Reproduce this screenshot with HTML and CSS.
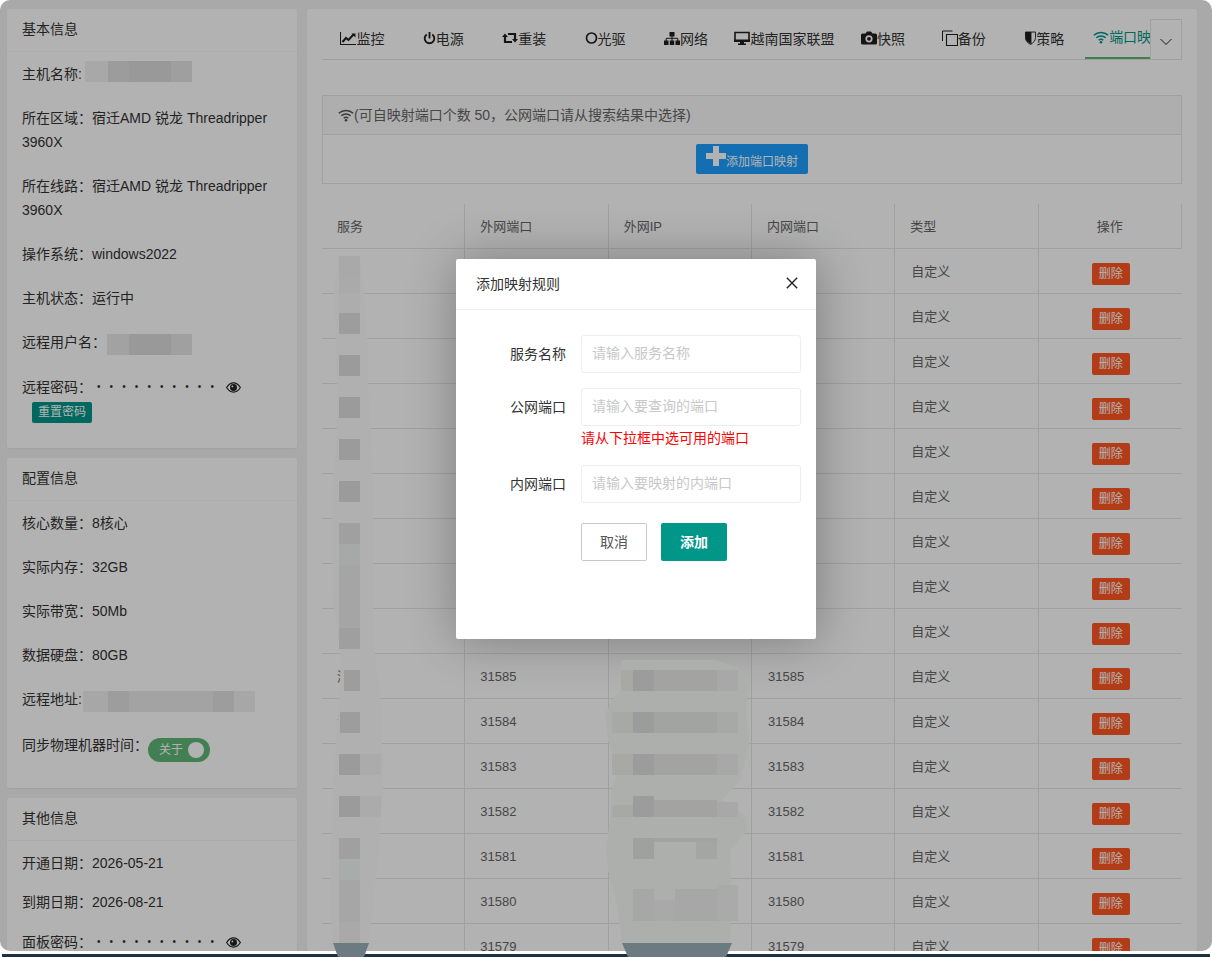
FILE: index.html
```html
<!DOCTYPE html>
<html lang="zh-CN">
<head>
<meta charset="utf-8">
<title>端口映射</title>
<link rel="stylesheet" href="styles.css">
</head>
<body>
<div class="shell">
  <div class="page">
    <aside class="side">
      <section class="card card-basic">
        <h3 class="card-head">基本信息</h3>
        <div class="card-body">
          <p class="row">主机名称:</p>
          <p class="row">所在区域：宿迁AMD 锐龙 Threadripper 3960X</p>
          <p class="row">所在线路：宿迁AMD 锐龙 Threadripper 3960X</p>
          <p class="row">操作系统：windows2022</p>
          <p class="row">主机状态：运行中</p>
          <p class="row">远程用户名：</p>
          <p class="row row-pass">远程密码：<span class="dots">••••••••••</span><svg class="eye" viewBox="0 0 16 12"><path d="M0.5 6C3 2 5.5 1 8 1s5 1 7.5 5C13 10 10.500 11 8 11S3 10 .5 6z" fill="none" stroke="currentColor" stroke-width="1.300"/><circle cx="8" cy="6" r="3.800" fill="currentColor"/><circle cx="6.800" cy="4.800" r="1" fill="#fff"/></svg><br><button class="btn-reset">重置密码</button></p>
        </div>
      </section>
      <section class="card card-config">
        <h3 class="card-head">配置信息</h3>
        <div class="card-body">
          <p class="row">核心数量：8核心</p>
          <p class="row">实际内存：32GB</p>
          <p class="row">实际带宽：50Mb</p>
          <p class="row">数据硬盘：80GB</p>
          <p class="row">远程地址:</p>
          <p class="row row-switch">同步物理机器时间：<span class="switch"><span>关于</span><i></i></span></p>
        </div>
      </section>
      <section class="card card-other">
        <h3 class="card-head">其他信息</h3>
        <div class="card-body">
          <p class="row">开通日期：2026-05-21</p>
          <p class="row">到期日期：2026-08-21</p>
          <p class="row row-pass">面板密码：<span class="dots">••••••••••</span><svg class="eye" viewBox="0 0 16 12"><path d="M0.5 6C3 2 5.5 1 8 1s5 1 7.5 5C13 10 10.500 11 8 11S3 10 .5 6z" fill="none" stroke="currentColor" stroke-width="1.300"/><circle cx="8" cy="6" r="3.800" fill="currentColor"/><circle cx="6.800" cy="4.800" r="1" fill="#fff"/></svg></p>
        </div>
      </section>
    </aside>

    <main class="panel">
      <div class="tabs">
        <ul class="tab-list">
          <li class="tab"><svg class="ico" viewBox="0 0 16 16"><path d="M.5 2v12.500H16" fill="none" stroke="currentColor" stroke-width="1.100"/><path d="M2.500 12l3.500-4 2.500 2 5-5.500" fill="none" stroke="currentColor" stroke-width="2"/><path d="M11.500 3.500H15.500V7.500z" fill="currentColor"/></svg>监控</li>
          <li class="tab"><svg class="ico ico-n" viewBox="0 0 14 16"><path d="M4 4.200a5.200 5.200 0 1 0 6 0" fill="none" stroke="currentColor" stroke-width="2"/><path d="M7 1.500v7" stroke="currentColor" stroke-width="2"/></svg>电源</li>
          <li class="tab"><svg class="ico" viewBox="0 0 16 16"><path d="M3 6v6h7" fill="none" stroke="currentColor" stroke-width="2.200"/><path d="M0 7l3-3.500L6 7z" fill="currentColor"/><path d="M13 10V4H6" fill="none" stroke="currentColor" stroke-width="2.200"/><path d="M10 9l3 3.500L16 9z" fill="currentColor"/></svg>重装</li>
          <li class="tab"><svg class="ico ico-n" viewBox="0 0 13 16"><circle cx="6.500" cy="8" r="5" fill="none" stroke="currentColor" stroke-width="1.700"/></svg>光驱</li>
          <li class="tab"><svg class="ico" viewBox="0 0 16 16"><path d="M5.500 2h5v4.500h-5zM0 10.500h4.500V15H0zM5.800 10.500h4.400V15H5.800zM11.500 10.500H16V15h-4.500z" fill="currentColor"/><path d="M2.200 11V8.300h11.600V11M8 6v5" fill="none" stroke="currentColor"/></svg>网络</li>
          <li class="tab"><svg class="ico" viewBox="0 0 16 16"><path d="M1 2.500h14v8.500H1z" fill="none" stroke="currentColor" stroke-width="1.600"/><path d="M0 9.500h16V12H0zM6 12h4v1.500h2V15H4v-1.500h2z" fill="currentColor"/></svg>越南国家联盟</li>
          <li class="tab"><svg class="ico" viewBox="0 0 16 16"><path fill-rule="evenodd" d="M1.500 3.500h3L6 1.500h4l1.500 2h3q1.500 0 1.500 1.500v8q0 1.500-1.500 1.500h-13Q0 14.500 0 13V5q0-1.500 1.500-1.500zM8 5.200a3.600 3.600 0 1 0 0 7.200 3.600 3.600 0 0 0 0-7.200z" fill="currentColor"/><circle cx="8" cy="8.800" r="1.900" fill="currentColor"/></svg>快照</li>
          <li class="tab"><svg class="ico" viewBox="0 0 16 16"><path d="M.5 11V1h10" fill="none" stroke="currentColor"/><path d="M4.500 4.500h11v11h-11z" fill="none" stroke="currentColor" stroke-width="1.100"/></svg>备份</li>
          <li class="tab"><svg class="ico ico-s" viewBox="0 0 12 16"><path d="M.5 1.500h11v6c0 3.500-2.500 6-5.500 7.500C3 13.500.5 11 .5 7.500z" fill="none" stroke="currentColor"/><path d="M.5 1.500H7v13.200C3 13 .5 11 .5 7.500z" fill="currentColor"/></svg>策略</li>
          <li class="tab tab-on"><svg class="ico" viewBox="0 0 16 16"><path d="M.8 6.300a10.500 10.500 0 0 1 14.400 0M3.300 8.800a7 7 0 0 1 9.400 0M5.700 11.200a3.500 3.500 0 0 1 4.600 0" fill="none" stroke="currentColor" stroke-width="1.500"/><circle cx="8" cy="13.300" r="1.300" fill="currentColor"/></svg><span class="tab-clip">端口映</span></li>
        </ul>
        <span class="tab-more"><svg viewBox="0 0 12 8"><path d="M.5 1l5.500 5.500L11.500 1" fill="none" stroke="currentColor" stroke-width="1"/></svg></span>
      </div>

      <div class="box">
        <div class="box-head"><svg class="ico" viewBox="0 0 16 16"><path d="M.8 6.300a10.500 10.500 0 0 1 14.400 0M3.300 8.800a7 7 0 0 1 9.400 0M5.700 11.200a3.500 3.500 0 0 1 4.600 0" fill="none" stroke="currentColor" stroke-width="1.500"/><circle cx="8" cy="13.300" r="1.300" fill="currentColor"/></svg><span class="box-title">(可自映射端口个数 50，公网端口请从搜索结果中选择)</span></div>
        <div class="box-body"><button class="btn-add"><span class="plus"></span><span class="add-text">添加端口映射</span></button></div>
      </div>

      <table class="grid">
        <thead>
          <tr><th>服务</th><th>外网端口</th><th>外网IP</th><th>内网端口</th><th>类型</th><th class="c">操作</th></tr>
        </thead>
        <tbody>
          <tr><td></td><td></td><td></td><td></td><td>自定义</td><td class="c"><span class="del">删除</span></td></tr>
          <tr><td></td><td></td><td></td><td></td><td>自定义</td><td class="c"><span class="del">删除</span></td></tr>
          <tr><td></td><td></td><td></td><td></td><td>自定义</td><td class="c"><span class="del">删除</span></td></tr>
          <tr><td></td><td></td><td></td><td></td><td>自定义</td><td class="c"><span class="del">删除</span></td></tr>
          <tr><td></td><td></td><td></td><td></td><td>自定义</td><td class="c"><span class="del">删除</span></td></tr>
          <tr><td></td><td></td><td></td><td></td><td>自定义</td><td class="c"><span class="del">删除</span></td></tr>
          <tr><td></td><td></td><td></td><td></td><td>自定义</td><td class="c"><span class="del">删除</span></td></tr>
          <tr><td></td><td></td><td></td><td></td><td>自定义</td><td class="c"><span class="del">删除</span></td></tr>
          <tr><td></td><td></td><td></td><td></td><td>自定义</td><td class="c"><span class="del">删除</span></td></tr>
          <tr><td>测</td><td>31585</td><td></td><td>31585</td><td>自定义</td><td class="c"><span class="del">删除</span></td></tr>
          <tr><td>测</td><td>31584</td><td></td><td>31584</td><td>自定义</td><td class="c"><span class="del">删除</span></td></tr>
          <tr><td></td><td>31583</td><td></td><td>31583</td><td>自定义</td><td class="c"><span class="del">删除</span></td></tr>
          <tr><td></td><td>31582</td><td></td><td>31582</td><td>自定义</td><td class="c"><span class="del">删除</span></td></tr>
          <tr><td></td><td>31581</td><td></td><td>31581</td><td>自定义</td><td class="c"><span class="del">删除</span></td></tr>
          <tr><td></td><td>31580</td><td></td><td>31580</td><td>自定义</td><td class="c"><span class="del">删除</span></td></tr>
          <tr><td></td><td>31579</td><td></td><td>31579</td><td>自定义</td><td class="c"><span class="del">删除</span></td></tr>
        </tbody>
      </table>
    </main>
  </div>

  <div class="shade">
    <div class="dialog">
      <div class="dialog-head">添加映射规则<svg class="close" viewBox="0 0 12 12"><path d="M.8.800l10.400 10.400M11.200.800L.8 11.200" stroke="currentColor" stroke-width="1.400"/></svg></div>
      <form class="dialog-body">
        <div class="field"><label class="field-label">服务名称</label><input class="field-input" placeholder="请输入服务名称"></div>
        <div class="field field-tight"><label class="field-label">公网端口</label><input class="field-input" placeholder="请输入要查询的端口"></div>
        <div class="field-error">请从下拉框中选可用的端口</div>
        <div class="field"><label class="field-label">内网端口</label><input class="field-input" placeholder="请输入要映射的内端口"></div>
        <div class="actions"><button type="button" class="btn-cancel">取消</button><button type="button" class="btn-ok">添加</button></div>
      </form>
    </div>
  </div>
</div>
<div class="foot"></div>

<svg class="redact" viewBox="0 0 1212 957" aria-hidden="true">
  <!-- sidebar mosaics -->
  <rect x="85" y="61" width="23" height="21" fill="#a8a8a8"/>
  <rect x="108" y="61" width="21" height="21" fill="#9c9c9c"/>
  <rect x="129" y="61" width="42" height="21" fill="#999"/>
  <rect x="171" y="61" width="21" height="21" fill="#9f9f9f"/>
  <rect x="107" y="334" width="22" height="21" fill="#a2a2a2"/>
  <rect x="129" y="334" width="42" height="21" fill="#999"/>
  <rect x="171" y="334" width="21" height="21" fill="#a0a0a0"/>
  <rect x="83" y="691" width="25" height="21" fill="#a7a7a7"/>
  <rect x="108" y="691" width="21" height="21" fill="#9d9d9d"/>
  <rect x="129" y="691" width="84" height="21" fill="#a3a3a3"/>
  <rect x="213" y="691" width="21" height="21" fill="#9d9d9d"/>
  <rect x="234" y="691" width="21" height="21" fill="#a7a7a7"/>

  <!-- service column -->
  <path d="M339 256H360L364 292L367 330L368 385L371 440L373 490L373 600L375 660L381 700L383 790L378 855L373 905L369 944H333L330 905L331 855L333 790L338 720L341 660L333 600L332 490L337 440L337 385L336 330L334 292z" fill="#afb0af"/>
  <rect x="339" y="256" width="21" height="21" fill="#a9a9a9"/>
  <rect x="339" y="277" width="21" height="16" fill="#aaa"/>
  <rect x="339" y="293" width="21" height="20" fill="#adadad"/>
  <rect x="339" y="313" width="21" height="21" fill="#9d9d9d"/>
  <rect x="339" y="355" width="21" height="21" fill="#9b9b9b"/>
  <rect x="339" y="397" width="21" height="21" fill="#9b9b9b"/>
  <rect x="339" y="439" width="21" height="21" fill="#9b9b9b"/>
  <rect x="339" y="481" width="21" height="21" fill="#9b9b9b"/>
  <rect x="339" y="523" width="21" height="21" fill="#a0a0a0"/>
  <rect x="339" y="544" width="21" height="21" fill="#a6a9a7"/>
  <rect x="339" y="565" width="21" height="63" fill="#a5a5a5"/>
  <rect x="339" y="628" width="21" height="21" fill="#9f9f9f"/>
  <rect x="344" y="670" width="16" height="21" fill="#9d9d9d"/>
  <rect x="340" y="712" width="20" height="21" fill="#9d9d9d"/>
  <rect x="339" y="754" width="21" height="21" fill="#9b9b9b"/>
  <rect x="339" y="796" width="21" height="21" fill="#9b9b9b"/>
  <rect x="339" y="838" width="21" height="21" fill="#a0a0a0"/>
  <rect x="339" y="859" width="21" height="21" fill="#a8adab"/>
  <rect x="339" y="880" width="21" height="42" fill="#a6a6a6"/>
  <rect x="339" y="922" width="21" height="21" fill="#a9a9a9"/>
  <rect x="360" y="754" width="21" height="21" fill="#ababab"/>
  <rect x="360" y="796" width="21" height="21" fill="#ababab"/>
  <path d="M333 943H369L364 957H338z" fill="#6c7a82"/>

  <!-- external IP column -->
  <path d="M621 660H716L738 668L748 690L746 712L749 745L740 780L722 800L745 815L748 830L730 850L732 900L730 943H622L616 900L608 870L606 850L610 820L612 790L618 770L608 740L605 715L612 700L621 690z" fill="#adafad"/>
  <rect x="621" y="670" width="12" height="21" fill="#a8a9a5"/>
  <rect x="633" y="670" width="21" height="21" fill="#9c9c9c"/>
  <rect x="654" y="670" width="63" height="21" fill="#a3a4a2"/>
  <rect x="717" y="670" width="21" height="21" fill="#a8a8a8"/>
  <rect x="612" y="712" width="21" height="21" fill="#a8a9a5"/>
  <rect x="633" y="712" width="21" height="21" fill="#9c9c9c"/>
  <rect x="654" y="712" width="63" height="21" fill="#a3a4a2"/>
  <rect x="717" y="712" width="21" height="21" fill="#a8a8a8"/>
  <rect x="612" y="754" width="21" height="21" fill="#a8a9a5"/>
  <rect x="633" y="754" width="21" height="21" fill="#9c9c9c"/>
  <rect x="654" y="754" width="63" height="21" fill="#a3a4a2"/>
  <rect x="717" y="754" width="21" height="21" fill="#a8a8a8"/>
  <rect x="633" y="796" width="21" height="21" fill="#9c9c9c"/>
  <rect x="654" y="800" width="63" height="17" fill="#a3a4a2"/>
  <rect x="612" y="805" width="21" height="12" fill="#a8a9a5"/>
  <rect x="717" y="802" width="21" height="15" fill="#a8a8a8"/>
  <rect x="633" y="838" width="21" height="21" fill="#a0a0a0"/>
  <rect x="654" y="838" width="63" height="4" fill="#a3a4a2"/>
  <rect x="696" y="842" width="21" height="17" fill="#a5a5a5"/>
  <rect x="633" y="889" width="21" height="32" fill="#a6a7a6"/>
  <rect x="654" y="900" width="21" height="21" fill="#a8a9a8"/>
  <rect x="675" y="889" width="42" height="32" fill="#a6a7a6"/>
  <rect x="717" y="885" width="21" height="36" fill="#a9aaa9"/>
  <path d="M622 943H732L726 957H628z" fill="#6c7a82"/>
</svg>
</body>
</html>
```

FILE: styles.css
```css
* { box-sizing: border-box; }

html, body {
  margin: 0;
  padding: 0;
  height: 957px;
  overflow: hidden;
  background: #fff;
}

body {
  position: relative;
  font-family: "Liberation Sans", "Noto Sans CJK SC", sans-serif;
  font-size: 14px;
  color: #333;
}

.shell {
  position: relative;
  height: 951px;
  overflow: hidden;
  border-radius: 10px;
  background: #f2f2f2;
}

.foot {
  height: 3px;
  margin: 3px 2px 0;
  background: #1b3340;
}

.page {
  display: flex;
  gap: 10px;
  padding: 9px 15px 0 7px;
  height: 951px;
  overflow: hidden;
}

/* sidebar */
.side {
  flex: 0 0 290px;
  display: flex;
  flex-direction: column;
  gap: 10px;
}

.card {
  flex: none;
  background: #fff;
  border-radius: 2px;
  box-shadow: 0 1px 2px rgba(0, 0, 0, .05);
}

.card-basic { height: 439px; }
.card-config { height: 330px; }

.card-head {
  margin: 0;
  padding: 0 15px;
  height: 43px;
  line-height: 41px;
  font-size: 14px;
  font-weight: 400;
  border-bottom: 1px solid #f6f6f6;
}

.card-body { padding: 10px 15px; }

.row {
  margin: 0 0 20px;
  line-height: 24px;
}

.card-other .row { margin-bottom: 15px; }

.row-pass { padding-top: 1px; }

.dots {
  display: inline-block;
  width: 126px;
  letter-spacing: 9.100px;
  font-size: 10px;
  line-height: 24px;
  padding-left: 5px;
  vertical-align: top;
  white-space: nowrap;
}

.eye {
  width: 15px;
  height: 11px;
  margin-left: 8px;
  vertical-align: -1px;
  color: #222;
}

.btn-reset {
  display: block;
  margin: 3px 0 0 10px;
  padding: 0;
  width: 60px;
  height: 21px;
  border: 0;
  border-radius: 2px;
  background: #009688;
  color: #fff;
  font: 12px/21px "Liberation Sans", "Noto Sans CJK SC", sans-serif;
}

.row-switch {
  padding-top: 2px;
  white-space: nowrap;
}

.switch {
  display: inline-flex;
  align-items: center;
  justify-content: space-between;
  width: 62px;
  height: 24px;
  padding: 0 6px 0 11px;
  border-radius: 12px;
  background: #5fb878;
  color: #fff;
  font-size: 12px;
  vertical-align: top;
  margin-top: 5px;
}

.switch i {
  width: 16px;
  height: 16px;
  border-radius: 50%;
  background: #fff;
}

/* main panel */
.panel {
  flex: 1;
  min-width: 0;
  padding: 10px 15px 0;
  background: #fff;
  border-radius: 2px;
}

.tabs {
  position: relative;
  height: 41px;
  border-bottom: 1px solid #e6e6e6;
}

.tab-list {
  display: flex;
  margin: 0;
  padding: 0;
  width: 828px;
  height: 40px;
  list-style: none;
}

.tab {
  flex: none;
  display: flex;
  align-items: center;
  justify-content: center;
  min-width: 80.900px;
  height: 40px;
  padding: 0 8px 2px;
  color: #333;
  white-space: nowrap;
}

.tab-on {
  justify-content: flex-start;
  width: 65px;
  min-width: 65px;
  padding-right: 0;
  color: #009688;
  border-bottom: 2px solid #5fb878;
}

.tab-clip {
  display: block;
  width: 41px;
  height: 20px;
  line-height: 20px;
}

.ico {
  width: 16px;
  height: 16px;
  flex: none;
  color: #1f1f1f;
}

.ico-n { width: 13px; }
.ico-s { width: 11px; }
.tab-on .ico { color: #009688; }

.tab-more {
  position: absolute;
  top: 0;
  right: 0;
  display: flex;
  align-items: center;
  justify-content: center;
  width: 32px;
  height: 41px;
  border: 1px solid #e6e6e6;
  background: #fff;
  color: #222;
  padding-top: 4px;
}

.tab-more svg { width: 12px; height: 8px; }

.box {
  width: 860px;
  margin-top: 35px;
  border: 1px solid #e6e6e6;
}

.box-head {
  display: flex;
  align-items: center;
  height: 39px;
  padding: 0 0 1px 15px;
  background: #fafafa;
  border-bottom: 1px solid #e6e6e6;
  color: #666;
}

.box-head .ico { color: #555; }
.box-title { margin-top: -2px; }

.box-body {
  height: 48px;
  padding-top: 9px;
  text-align: center;
}

.btn-add {
  display: inline-flex;
  align-items: center;
  width: 112px;
  height: 30px;
  padding: 0 0 0 10px;
  border: 0;
  border-radius: 2px;
  background: #1e9fff;
  color: #fff;
  font: 12px/18px "Liberation Sans", "Noto Sans CJK SC", sans-serif;
  vertical-align: top;
}

.add-text { margin-top: 6px; }

.plus {
  flex: none;
  width: 20px;
  height: 20px;
  margin-bottom: 6px;
  background:
    linear-gradient(#fff, #fff) center / 20px 6px no-repeat,
    linear-gradient(#fff, #fff) center / 6px 20px no-repeat;
}

.grid {
  width: 860px;
  margin-top: 20px;
  border-collapse: separate;
  border-spacing: 0;
  table-layout: fixed;
}

.grid th,
.grid td {
  padding: 0 15px 2px;
  font-size: 13px;
  font-weight: 400;
  text-align: left;
  color: #666;
  border-bottom: 1px solid #e6e6e6;
  border-right: 1px solid #e6e6e6;
}

.grid th { height: 45px; }
.grid td { height: 45px; }
.grid td:last-child { border-right: 0; }
.grid td:nth-child(2),
.grid td:nth-child(4) { padding-bottom: 0; }
.grid td:nth-child(4),
.grid td:nth-child(5) { padding-left: 16px; }
.grid .c { text-align: center; }
.grid td.c { padding-left: 16px; padding-right: 15px; }

.del {
  display: inline-block;
  width: 38px;
  height: 22px;
  margin-top: 7px;
  line-height: 22px;
  border-radius: 2px;
  background: #ff5722;
  color: #fff;
  font-size: 12px;
  text-align: center;
  vertical-align: middle;
}

/* modal */
.shade {
  position: absolute;
  inset: 0;
  background: rgba(0, 0, 0, .3);
}

.dialog {
  position: absolute;
  left: 456px;
  top: 259px;
  width: 360px;
  height: 380px;
  background: #fff;
  border-radius: 2px;
  box-shadow: 1px 1px 50px rgba(0, 0, 0, .3);
}

.dialog-head {
  display: flex;
  align-items: center;
  justify-content: space-between;
  height: 51px;
  padding: 0 18px 2px 20px;
  border-bottom: 1px solid #eee;
  color: #333;
}

.close { width: 12px; height: 12px; color: #222; }

.dialog-body { padding: 25px 15px 0 0; }

.field {
  display: flex;
  align-items: center;
  margin-bottom: 15px;
}

.field-tight { margin-bottom: 0; }

.field-label {
  flex: none;
  width: 125px;
  padding: 0 15px 2px 0;
  text-align: right;
  color: #333;
}

.field-input {
  flex: 1;
  min-width: 0;
  height: 38px;
  padding: 0 10px 2px;
  border: 1px solid #eee;
  border-radius: 3px;
  outline: 0;
  background: #fff;
  color: #333;
  font: 14px "Liberation Sans", "Noto Sans CJK SC", sans-serif;
}

.field-input::placeholder { color: #c8c8c8; opacity: 1; }

.field-error {
  margin: 0 0 15px 125px;
  line-height: 24px;
  color: #f00;
}

.actions {
  display: flex;
  gap: 14px;
  margin: 20px 0 0 125px;
}

.btn-cancel,
.btn-ok {
  width: 66px;
  height: 38px;
  padding: 0 0 2px;
  border-radius: 2px;
  font: 14px "Liberation Sans", "Noto Sans CJK SC", sans-serif;
}

.btn-cancel {
  background: #fff;
  border: 1px solid #c9c9c9;
  color: #555;
}

.btn-ok {
  background: #009688;
  border: 0;
  color: #fff;
  font-weight: 700;
}

.redact {
  position: absolute;
  left: 0;
  top: 0;
  width: 1212px;
  height: 957px;
  pointer-events: none;
}
```
